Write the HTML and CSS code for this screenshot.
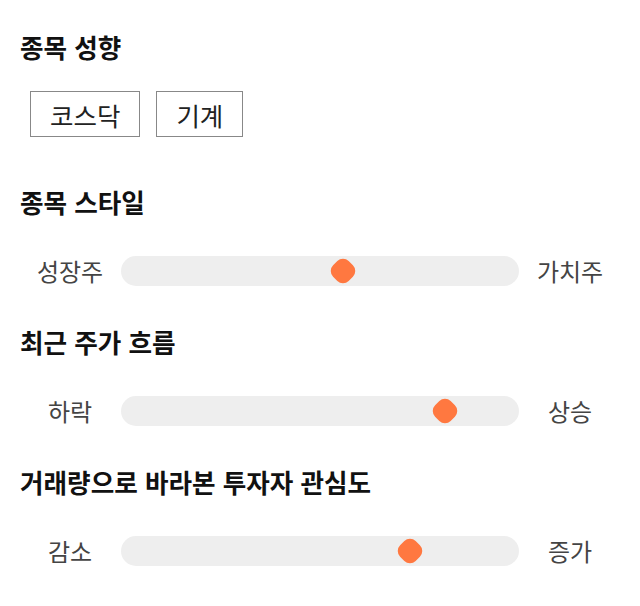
FILE: index.html
```html
<!DOCTYPE html>
<html lang="ko">
<head>
    <meta charset="UTF-8">
    <meta name="viewport" content="width=device-width, initial-scale=1.0">
    <title>종목 성향</title>
    <link rel="stylesheet" href="styles.css">
</head>
<body>
    <div class="section">
        <h2 class="title">종목 성향</h2>
        <div class="tags">
            <span class="tag">코스닥</span>
            <span class="tag">기계</span>
        </div>
    </div>

    <div class="section">
        <h2 class="title">종목 스타일</h2>
        <div class="slider">
            <span class="label">성장주</span>
            <div class="track"><span class="thumb" style="left: 55.8%"></span></div>
            <span class="label">가치주</span>
        </div>
    </div>

    <div class="section">
        <h2 class="title">최근 주가 흐름</h2>
        <div class="slider">
            <span class="label">하락</span>
            <div class="track"><span class="thumb" style="left: 81.4%"></span></div>
            <span class="label">상승</span>
        </div>
    </div>

    <div class="section">
        <h2 class="title">거래량으로 바라본 투자자 관심도</h2>
        <div class="slider">
            <span class="label">감소</span>
            <div class="track"><span class="thumb" style="left: 72.6%"></span></div>
            <span class="label">증가</span>
        </div>
    </div>
</body>
</html>
```

FILE: styles.css
```css
body{
    margin: 0;
    padding: 32px 20px 0 20px;
    background-color: white;
    color: #111;
    font-family: "Noto Sans CJK KR", "Noto Sans", sans-serif;
}
.section{
    margin-bottom: 41px;
}
.title{
    margin: 0;
    font-size: 25.6px;
    line-height: 30px;
    font-weight: bold;
    color: #111;
}
.tags{
    display: flex;
    gap: 16px;
    margin-top: 29px;
    margin-bottom: 50px;
    padding-left: 10px;
}
.tag{
    display: flex;
    align-items: center;
    height: 44px;
    padding: 0 19px;
    border: 1px solid #888;
    font-size: 25.5px;
    color: #222;
}
.slider{
    display: grid;
    grid-template-columns: 100px 1fr 100px;
    align-items: center;
    margin-top: 39px;
}
.label{
    text-align: center;
    font-size: 24px;
    line-height: 30px;
    color: #444;
}
.track{
    position: relative;
    height: 30px;
    margin: 0 1px;
    background-color: #eeeeee;
    border-radius: 15px;
}
.thumb{
    position: absolute;
    top: 4px;
    width: 22px;
    height: 22px;
    margin-left: -11px;
    background-color: #ff7840;
    border-radius: 8px;
    transform: rotate(45deg);
}
```
